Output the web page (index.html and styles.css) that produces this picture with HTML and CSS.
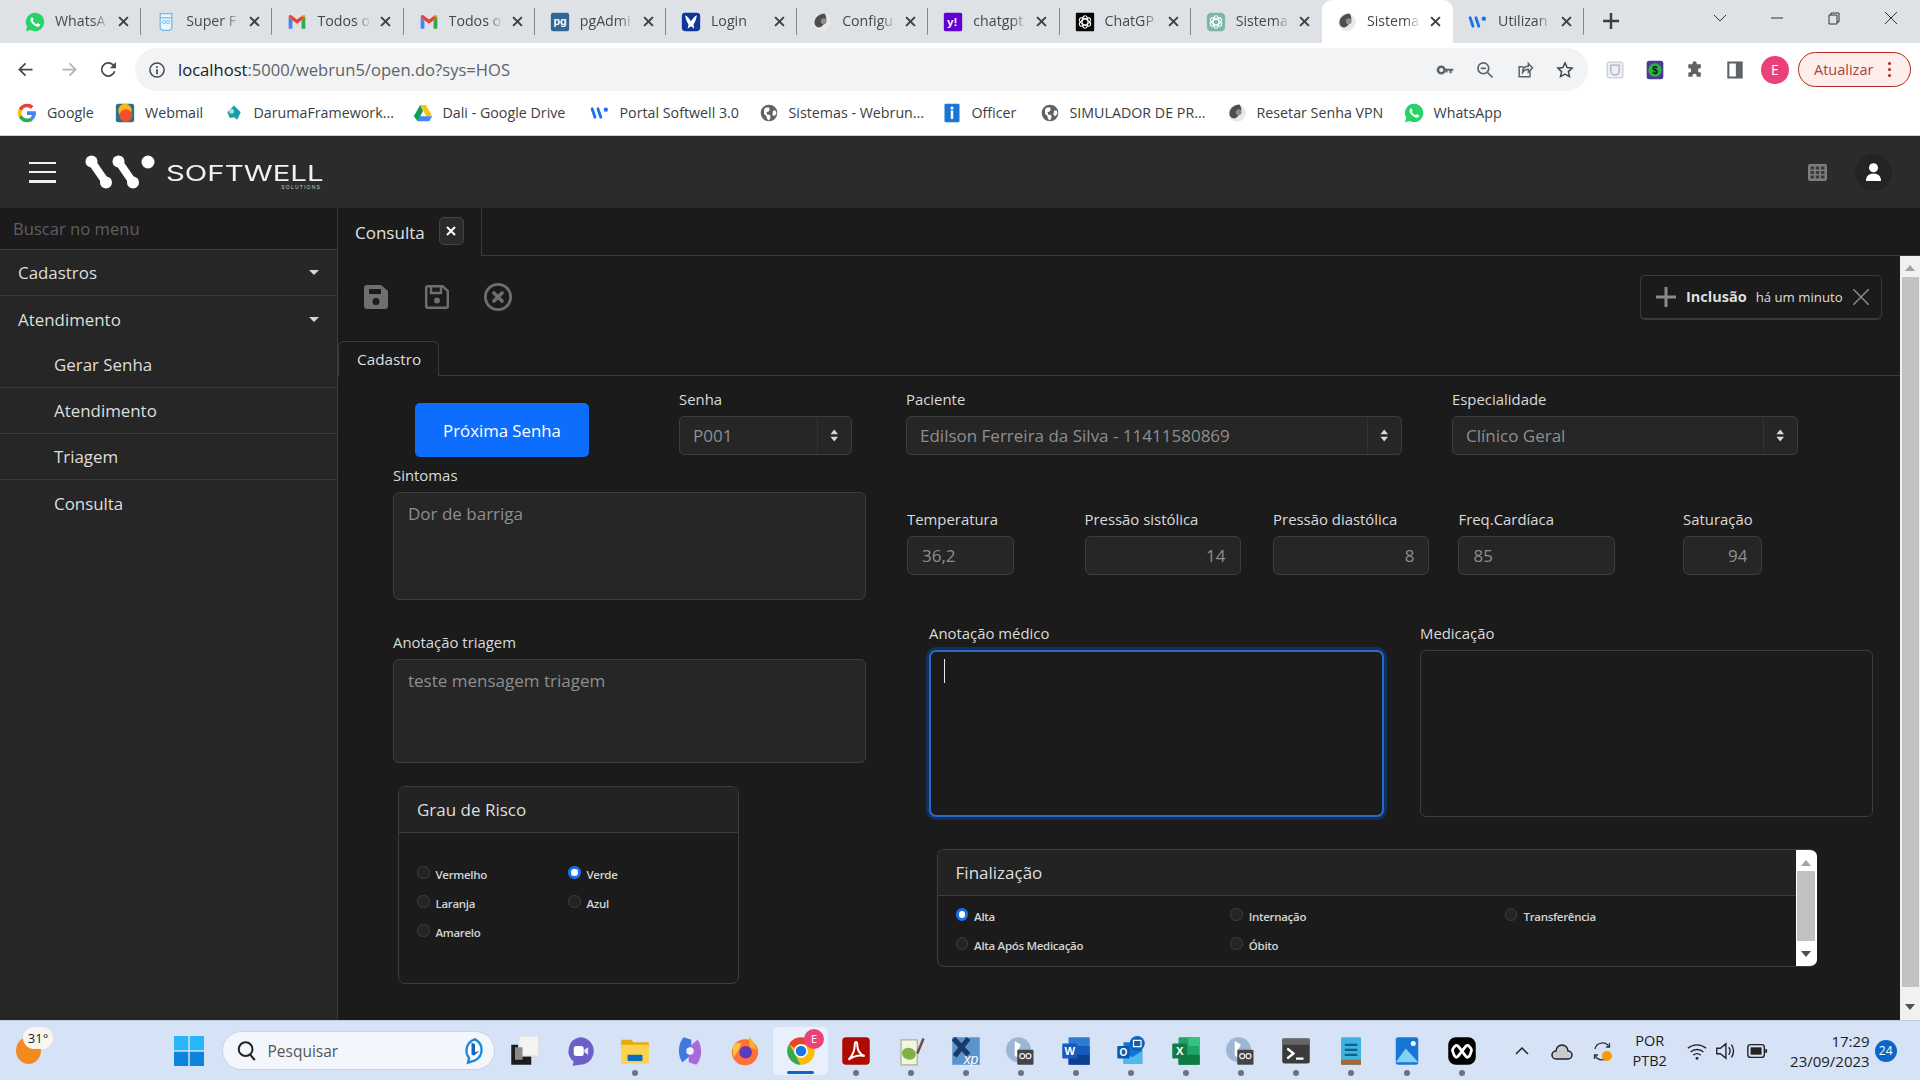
FILE: index.html
```html
<!DOCTYPE html>
<html lang="pt-BR">
<head>
<meta charset="utf-8">
<title>Sistema</title>
<link rel="stylesheet" href="styles.css">
</head>
<body>
<svg class="defs" xmlns="http://www.w3.org/2000/svg">
  <symbol id="i-whats" viewBox="0 0 24 24"><path fill="#25d366" d="M12 1a11 11 0 0 0-9.4 16.6L1.2 23l5.5-1.4A11 11 0 1 0 12 1z"/><path fill="#fff" d="M8.6 6.2c-.7 0-2 1.200-2 3s1.300 3.700 2.900 5.300 3.700 3.200 5.800 3.200c1.700 0 2.900-1.200 2.900-2.400 0-.5-2.700-2-3.200-1.800-.5.2-.9 1.100-1.400 1.100-.7 0-4-2.800-4.200-4 0-.5.900-.9 1-1.400 0-.6-1.400-3-1.800-3z"/></symbol>
  <symbol id="i-super" viewBox="0 0 24 24"><path fill="#eaf4fc" stroke="#79b7e6" stroke-width="1.500" d="M5 2h14v18l-3 2H8l-3-2z"/><path fill="none" stroke="#79b7e6" stroke-width="1.500" d="M5 7h14"/><circle cx="9.500" cy="12" r="2" fill="none" stroke="#79b7e6"/><circle cx="14.500" cy="12" r="2" fill="none" stroke="#79b7e6"/></symbol>
  <symbol id="i-gmail" viewBox="0 0 24 24"><path fill="#4285f4" d="M2 6v14h4.500V10z"/><path fill="#34a853" d="M17.500 10v10H22V6z"/><path fill="#ea4335" d="M2 6c0-2 2-3 3.600-1.800L12 9l6.400-4.800C20 3 22 4 22 6l-4.500 4L12 14l-5.500-4z"/><path fill="#fbbc04" d="M17.500 5.500 22 6c0-2-2-3-3.600-1.800z"/></symbol>
  <symbol id="i-login" viewBox="0 0 24 24"><rect x="1" y="1" width="22" height="22" rx="4" fill="#12359b"/><path fill="#fff" d="M5 4c3 1 5 5 7 7 2-2 4-6 7-7-.5 5-2.500 9-4 11l1 5-4-3-4 3 1-5C7.500 13 5.500 9 5 4z"/></symbol>
  <symbol id="i-soft" viewBox="0 0 24 24"><circle cx="12" cy="12" r="10.500" fill="#e9e9e9"/><path fill="#4d4d4d" d="M15 1.800C9 2 3.500 6 3 12c-.3 3.500 2 6.500 5.500 6.500 3 0 4-2.500 6-4 3-2.500 4-8 .5-12.700z"/><circle cx="14" cy="11" r="3.500" fill="#8d8d8d"/></symbol>
  <symbol id="i-gpt" viewBox="0 0 24 24"><rect x="1" y="1" width="22" height="22" rx="1" fill="#050505"/><g fill="none" stroke="#fff" stroke-width="1.300"><ellipse cx="12" cy="12" rx="3.500" ry="7.500"/><ellipse cx="12" cy="12" rx="3.500" ry="7.500" transform="rotate(60 12 12)"/><ellipse cx="12" cy="12" rx="3.500" ry="7.500" transform="rotate(120 12 12)"/></g></symbol>
  <symbol id="i-gpt2" viewBox="0 0 24 24"><rect x="1" y="1" width="22" height="22" rx="5" fill="#7fb7a6"/><g fill="none" stroke="#fff" stroke-width="1.300"><ellipse cx="12" cy="12" rx="3.500" ry="7.500"/><ellipse cx="12" cy="12" rx="3.500" ry="7.500" transform="rotate(60 12 12)"/><ellipse cx="12" cy="12" rx="3.500" ry="7.500" transform="rotate(120 12 12)"/></g></symbol>
  <symbol id="i-w" viewBox="0 0 24 24"><g fill="none" stroke="#1a73e8" stroke-width="3.400" stroke-linecap="round"><path d="M2.500 7l3.500 10M9.500 7l3.500 10"/></g><circle cx="19" cy="8" r="2.600" fill="#1a73e8"/></symbol>
  <symbol id="i-google" viewBox="0 0 24 24"><path fill="#ea4335" d="M12 5a7 7 0 0 1 4.700 1.800l3-3A11 11 0 0 0 2.200 7l3.500 2.700A7 7 0 0 1 12 5z"/><path fill="#4285f4" d="M22.700 12.300c0-.8-.1-1.500-.2-2.300H12v4.300h6a5 5 0 0 1-2.200 3.400l3.400 2.600c2.100-1.900 3.500-4.700 3.500-8z"/><path fill="#fbbc04" d="M5.700 14.300a7 7 0 0 1 0-4.600L2.200 7a11 11 0 0 0 0 10z"/><path fill="#34a853" d="M12 23c3 0 5.500-1 7.200-2.700l-3.400-2.600A7 7 0 0 1 5.700 14.300L2.200 17A11 11 0 0 0 12 23z"/></symbol>
  <symbol id="i-webmail" viewBox="0 0 24 24"><rect x="1" y="1" width="22" height="22" rx="3" fill="#2f6f87"/><circle cx="12" cy="9" r="8" fill="#fdb515"/><circle cx="13" cy="15" r="7.500" fill="#f0512d"/></symbol>
  <symbol id="i-daruma" viewBox="0 0 24 24"><path fill="#1f9aa8" d="M12 3l8 8-4 9-4-3-5 1-3-7z"/><circle cx="9" cy="10" r="3" fill="#a9dde2"/></symbol>
  <symbol id="i-drive" viewBox="0 0 24 24"><path fill="#ffc107" d="M8.500 2.500h7L23 16h-7z"/><path fill="#4285f4" d="M5.500 22h14l3.500-6H8.500z"/><path fill="#0f9d58" d="M8.500 2.500L1 16l4.500 6L12 9.500z"/></symbol>
  <symbol id="i-globe" viewBox="0 0 24 24"><circle cx="12" cy="12" r="10" fill="#5f6368"/><path fill="#fff" d="M7 6l4-1 2 2-1 3-3 1 1 3 3 0 1 3-2 4c-2-1-3-3-3-5l-3-3 0-4zM17 9l3 0 1 4-3 3-2-2z"/></symbol>
  <symbol id="i-officer" viewBox="0 0 24 24"><rect x="3" y="1" width="18" height="22" rx="1" fill="#1976d2"/><circle cx="12" cy="6" r="1.800" fill="#fff"/><rect x="10.500" y="9" width="3" height="10" fill="#fff"/></symbol>
  <symbol id="i-back" viewBox="0 0 24 24"><path fill="none" stroke="currentColor" stroke-width="2" d="M20 12H5M12 5l-7 7 7 7"/></symbol>
  <symbol id="i-fwd" viewBox="0 0 24 24"><path fill="none" stroke="currentColor" stroke-width="2" d="M4 12h15M12 5l7 7-7 7"/></symbol>
  <symbol id="i-reload" viewBox="0 0 24 24"><path fill="none" stroke="currentColor" stroke-width="2" d="M19 14a7.500 7.500 0 1 1-2-7.500L20 9"/><path fill="currentColor" d="M20.500 3.500v7h-7z"/></symbol>
  <symbol id="i-info" viewBox="0 0 24 24"><circle cx="12" cy="12" r="8.500" fill="none" stroke="#44474a" stroke-width="1.800"/><path fill="#44474a" d="M11 11h2v6h-2zM11 7.500h2v2h-2z"/></symbol>
  <symbol id="i-key" viewBox="0 0 24 24"><circle cx="7.500" cy="12" r="4" fill="none" stroke="#5f6368" stroke-width="3"/><path fill="#5f6368" d="M11 10.500h11V13h-2v3h-2.500v-3H15v2h-2.500v-2H11z"/></symbol>
  <symbol id="i-zoom" viewBox="0 0 24 24"><circle cx="10" cy="10" r="6.500" fill="none" stroke="#5f6368" stroke-width="2"/><path stroke="#5f6368" stroke-width="2" d="M15 15l6 6M7 10h6"/></symbol>
  <symbol id="i-share" viewBox="0 0 24 24"><path fill="none" stroke="#5f6368" stroke-width="1.800" d="M18 13v7H5V8h5M9 15c0-5 3-7.500 7-7.500V4l5 5.500-5 5V11c-3 0-5 1-7 4z"/></symbol>
  <symbol id="i-star" viewBox="0 0 24 24"><path fill="none" stroke="#44474a" stroke-width="1.800" d="M12 3.500l2.600 5.600 6 .7-4.500 4.100 1.300 6-5.400-3-5.400 3 1.300-6-4.500-4.100 6-.7z"/></symbol>
  <symbol id="i-puzzle" viewBox="0 0 24 24"><path fill="#5f6368" d="M9 4a2.500 2.500 0 0 1 5 0v1h5v5h-1a2.500 2.500 0 0 0 0 5h1v5h-5v-1a2.500 2.500 0 0 0-5 0v1H4v-5h1a2.500 2.500 0 0 0 0-5H4V5h5z"/></symbol>
  <symbol id="i-ext" viewBox="0 0 24 24"><rect x="2.500" y="2.500" width="19" height="19" rx="2" fill="#eceff3" stroke="#b8bcc2"/><path fill="none" stroke="#aab0b6" stroke-width="1.500" d="M7 6h10v7a5 5 0 0 1-10 0z"/></symbol>
  <symbol id="i-side" viewBox="0 0 24 24"><rect x="4" y="3" width="16" height="18" fill="none" stroke="#5f6368" stroke-width="2.500"/><rect x="13" y="3" width="7" height="18" fill="#5f6368"/></symbol>
  <symbol id="i-save-f" viewBox="0 0 24 24"><path fill="#6f6f6f" fill-rule="evenodd" d="M3 0h14l7 6v15a3 3 0 0 1-3 3H3a3 3 0 0 1-3-3V3a3 3 0 0 1 3-3zm2 4v5h12V4zm7 9a3.500 3.500 0 1 0 0 7 3.500 3.500 0 0 0 0-7z"/></symbol>
  <symbol id="i-save-o" viewBox="0 0 24 24"><path fill="none" stroke="#6f6f6f" stroke-width="2.400" d="M3 1.200h14.500L22.800 6v15a1.800 1.800 0 0 1-1.800 1.800H3A1.800 1.800 0 0 1 1.200 21V3A1.800 1.800 0 0 1 3 1.200z"/><path fill="none" stroke="#6f6f6f" stroke-width="2.400" d="M6 1.500v6.500h10V1.500"/><circle cx="12" cy="15.500" r="3" fill="#6f6f6f"/></symbol>
  <symbol id="i-cancel" viewBox="0 0 24 24"><circle cx="12" cy="12" r="10.800" fill="none" stroke="#6f6f6f" stroke-width="2.400"/><path stroke="#6f6f6f" stroke-width="3" stroke-linecap="round" d="M8.500 8.500l7 7M15.500 8.500l-7 7"/></symbol>
  <symbol id="i-updown" viewBox="0 0 10 14"><path fill="#d8d8d8" d="M5 0l4.500 5.500H.5zM5 14L.5 8.500h9z"/></symbol>
  <symbol id="i-win" viewBox="0 0 24 24"><rect width="11.400" height="11.400" fill="#29b6f6"/><rect x="12.600" width="11.400" height="11.400" fill="#29b6f6"/><rect y="12.600" width="11.400" height="11.400" fill="#0a84dc"/><rect x="12.600" y="12.600" width="11.400" height="11.400" fill="#0a84dc"/></symbol>
  <symbol id="i-bing" viewBox="0 0 24 24"><path fill="#fff" stroke="#1e88d8" stroke-width="2" d="M12 2a10 10 0 0 1 0 18l-6 2 1-4a10 10 0 0 1 5-16z"/><path fill="#1565c0" d="M9 5l3 1v7l4-1-5 4-2-1z"/></symbol>
  <symbol id="i-task" viewBox="0 0 24 24"><rect x="1" y="7" width="16" height="16" fill="#1c1c1c"/><rect x="7" y="0" width="16" height="16" fill="#f3f3f3" stroke="#ddd"/><rect x="4" y="9" width="6" height="10" fill="#8a8a8a"/></symbol>
  <symbol id="i-teams" viewBox="0 0 24 24"><path fill="#6c5fc7" d="M12 1a11 11 0 0 1 0 22c-2 0-4 .500-6 1l1-3.500A11 11 0 0 1 12 1z"/><rect x="7" y="8" width="8" height="8" rx="2" fill="#fff"/><path fill="#e9e6fb" d="M15.500 11l3-2v6l-3-2z"/></symbol>
  <symbol id="i-folder" viewBox="0 0 24 24"><path fill="#e8a90c" d="M1 3h8l2 2h12v5H1z"/><path fill="#fcd34d" d="M1 7h22v15H1z"/><rect x="6" y="15" width="12" height="5" rx="1" fill="#0a6cc2"/></symbol>
  <symbol id="i-copilot" viewBox="0 0 24 24"><path fill="#3f78e0" d="M7 1l6 2v12l-7 6C2 16 2 6 7 1z"/><path fill="#a96ad9" d="M17 23l-6-2V9l7-6c4 5 4 15-1 20z"/><circle cx="12" cy="12" r="3" fill="#e8eefc"/></symbol>
  <symbol id="i-fox" viewBox="0 0 24 24"><circle cx="12" cy="13" r="10.500" fill="#ff7139"/><path fill="#ffb01f" d="M15 1c3 2 6 6 6 10l-5-2z"/><circle cx="12.500" cy="13" r="5" fill="#5a3bbd"/><path fill="#ffc53d" d="M2 9c2-3 5-4 7-3l-2 5-4 6z"/></symbol>
  <symbol id="i-chrome" viewBox="0 0 24 24"><circle cx="12" cy="12" r="11" fill="#fbbc04"/><path fill="#ea4335" d="M12 1a11 11 0 0 1 9.500 5.500H12A5.500 5.500 0 0 0 7 9.500L2.500 6.500A11 11 0 0 1 12 1z"/><path fill="#34a853" d="M1 12a11 11 0 0 1 1.500-5.500L7.500 15l4 8A11 11 0 0 1 1 12z"/><circle cx="12" cy="12" r="5.500" fill="#fff"/><circle cx="12" cy="12" r="4.200" fill="#1a73e8"/></symbol>
  <symbol id="i-acro" viewBox="0 0 24 24"><rect x="1" y="1" width="22" height="22" rx="3" fill="#ad0b00"/><path fill="none" stroke="#fff" stroke-width="1.600" d="M6 19c3-3 5-8 5-12 0-3 2-3 2 0 0 5 3 8 6 9-4-1-9 0-13 3z"/></symbol>
  <symbol id="i-npp" viewBox="0 0 24 24"><path fill="#f2f5e6" stroke="#aab38c" d="M4 3h13v20H4z"/><path fill="#7cb342" d="M5 12c3-4 8-3 10 0s0 7-4 7-7-3-6-7z"/><path stroke="#6d4c41" stroke-width="2" d="M17 14l5-12"/></symbol>
  <symbol id="i-vm" viewBox="0 0 24 24"><circle cx="10" cy="11" r="10" fill="#9db6d4"/><path fill="#fff" d="M7 4l5 3-3 5 3 6-5-2z"/><rect x="9" y="11" width="13" height="12" rx="1" fill="#444"/><circle cx="13" cy="16" r="2" fill="none" stroke="#eee"/><circle cx="18" cy="16" r="2" fill="none" stroke="#eee"/></symbol>
  <symbol id="i-term" viewBox="0 0 24 24"><rect x="1" y="2" width="22" height="20" rx="2" fill="#3b3b3b"/><rect x="1" y="2" width="22" height="5" fill="#666"/><path fill="none" stroke="#fff" stroke-width="1.800" d="M5 10l5 4-5 4M12 18h6"/></symbol>
  <symbol id="i-note" viewBox="0 0 24 24"><rect x="4" y="1" width="16" height="22" rx="1" fill="#3db3e3"/><path stroke="#0e5f8a" stroke-width="1.800" d="M7 7h10M7 11h10M7 15h10"/><rect x="4" y="19" width="16" height="4" fill="#a1683a"/></symbol>
  <symbol id="i-photo" viewBox="0 0 24 24"><rect x="3" y="1" width="18" height="22" rx="2" fill="#1976d2"/><path fill="#7fd3f7" d="M3 21l8-11 10 11z"/><circle cx="17" cy="6" r="2" fill="#fff"/></symbol>
  <symbol id="i-loop" viewBox="0 0 24 24"><rect x="1" y="1" width="22" height="22" rx="6" fill="#000"/><path fill="none" stroke="#fff" stroke-width="2.200" d="M12 12C9 8 8 6.500 6.500 8S4 11 4.500 12 5 15 6.500 16.500 9 16 12 12s4-5.500 5.500-4 2.500 3 2 4-.5 3-2 4.500-2.500 0-5.500-4.500z"/></symbol>
  <symbol id="i-cloud" viewBox="0 0 24 24"><path fill="#c8cbd0" stroke="#222" stroke-width="1.500" d="M6 20a4 4 0 0 1 0-8 6 6 0 0 1 12 0 4 4 0 0 1 0 8z"/></symbol>
  <symbol id="i-sync" viewBox="0 0 24 24"><path fill="none" stroke="#333" stroke-width="1.300" d="M5 10a7.500 7.500 0 0 1 14-2M19 16a7.500 7.500 0 0 1-14 0M16 8h3.500V4M8 16H4.500v4"/><circle cx="17" cy="17" r="5" fill="#f59b00"/></symbol>
  <symbol id="i-wifi" viewBox="0 0 24 24"><path fill="none" stroke="#222" stroke-width="1.500" d="M2 9c6-5 14-5 20 0M5 13c4-3.500 10-3.500 14 0M8 16.500c2.500-2 5.500-2 8 0"/><circle cx="12" cy="20" r="1.500" fill="#222"/></symbol>
  <symbol id="i-vol" viewBox="0 0 24 24"><path fill="none" stroke="#222" stroke-width="1.500" d="M3 9v6h4l6 5V4L7 9zM16 8c2 2 2 6 0 8M19 5c3 4 3 10 0 14"/></symbol>
  <symbol id="i-bat" viewBox="0 0 24 24"><rect x="2" y="5" width="18" height="14" rx="3" fill="none" stroke="#222" stroke-width="1.500"/><rect x="5" y="8" width="12" height="8" fill="#222"/><rect x="21" y="10" width="2" height="4" fill="#222"/></symbol>
  <symbol id="i-search" viewBox="0 0 24 24"><circle cx="10.500" cy="10" r="7.500" fill="none" stroke="#222" stroke-width="2.200"/><path stroke="#222" stroke-width="2.400" d="M15.500 16l5 6"/></symbol>
  <symbol id="i-x" viewBox="0 0 10 10"><path stroke="currentColor" stroke-width="1.800" d="M1 1l8 8M9 1l-8 8"/></symbol>
</svg>

<div class="tabstrip">
  <div class="tab"><svg class="fav"><use href="#i-whats"/></svg><span class="tab-t">WhatsA</span><svg class="tab-x"><use href="#i-x"/></svg></div>
  <div class="tab"><svg class="fav"><use href="#i-super"/></svg><span class="tab-t">Super F</span><svg class="tab-x"><use href="#i-x"/></svg></div>
  <div class="tab"><svg class="fav"><use href="#i-gmail"/></svg><span class="tab-t">Todos o</span><svg class="tab-x"><use href="#i-x"/></svg></div>
  <div class="tab"><svg class="fav"><use href="#i-gmail"/></svg><span class="tab-t">Todos o</span><svg class="tab-x"><use href="#i-x"/></svg></div>
  <div class="tab"><svg class="fav" viewBox="0 0 24 24"><rect x="1" y="1" width="22" height="22" rx="3" fill="#336791"/><text x="12" y="15" text-anchor="middle" font-family="Liberation Sans" font-weight="700" font-size="13" fill="#fff">pg</text></svg><span class="tab-t">pgAdmi</span><svg class="tab-x"><use href="#i-x"/></svg></div>
  <div class="tab"><svg class="fav"><use href="#i-login"/></svg><span class="tab-t">Login</span><svg class="tab-x"><use href="#i-x"/></svg></div>
  <div class="tab"><svg class="fav"><use href="#i-soft"/></svg><span class="tab-t">Configu</span><svg class="tab-x"><use href="#i-x"/></svg></div>
  <div class="tab"><svg class="fav" viewBox="0 0 24 24"><rect x="1" y="1" width="22" height="22" rx="2" fill="#6001d2"/><text x="11" y="17" text-anchor="middle" font-family="Liberation Sans" font-weight="700" font-size="14" fill="#fff">y!</text></svg><span class="tab-t">chatgpt</span><svg class="tab-x"><use href="#i-x"/></svg></div>
  <div class="tab"><svg class="fav"><use href="#i-gpt"/></svg><span class="tab-t">ChatGP</span><svg class="tab-x"><use href="#i-x"/></svg></div>
  <div class="tab tab-pre"><svg class="fav"><use href="#i-gpt2"/></svg><span class="tab-t">Sistema</span><svg class="tab-x"><use href="#i-x"/></svg></div>
  <div class="tab tab-on"><svg class="fav"><use href="#i-soft"/></svg><span class="tab-t">Sistema</span><svg class="tab-x"><use href="#i-x"/></svg></div>
  <div class="tab"><svg class="fav"><use href="#i-w"/></svg><span class="tab-t">Utilizan</span><svg class="tab-x"><use href="#i-x"/></svg></div>
  <svg class="newtab" viewBox="0 0 18 18"><path stroke="#3c3f43" stroke-width="2.400" d="M9 1v16M1 9h16"/></svg>
  <div class="winctl">
    <svg class="wc wc-chev" viewBox="0 0 14 8"><path fill="none" stroke="#333" d="M1 1l6 6 6-6"/></svg>
    <svg class="wc" viewBox="0 0 14 14"><path stroke="#333" d="M1 7h12"/></svg>
    <svg class="wc" viewBox="0 0 14 14"><path fill="none" stroke="#333" d="M2 4h8v9H2zM4 4V2h8v9h-2"/></svg>
    <svg class="wc" viewBox="0 0 14 14"><path stroke="#333" d="M1 1l12 12M13 1L1 13"/></svg>
  </div>
</div>

<div class="toolbar">
  <svg class="nav nav-back"><use href="#i-back"/></svg>
  <svg class="nav nav-fwd"><use href="#i-fwd"/></svg>
  <svg class="nav nav-rel"><use href="#i-reload"/></svg>
  <div class="omnibox">
    <svg class="omni-info"><use href="#i-info"/></svg>
    <span class="url"><b>localhost</b>:5000/webrun5/open.do?sys=HOS</span>
    <div class="omni-right">
      <svg class="ti"><use href="#i-key"/></svg>
      <svg class="ti"><use href="#i-zoom"/></svg>
      <svg class="ti"><use href="#i-share"/></svg>
      <svg class="ti"><use href="#i-star"/></svg>
    </div>
  </div>
  <div class="exts">
    <svg class="ti"><use href="#i-ext"/></svg>
    <svg class="ti" viewBox="0 0 24 24"><rect x="2" y="1" width="20" height="22" rx="3" fill="#4a3d8f"/><circle cx="12" cy="12" r="8" fill="#2bb24c"/><text x="12" y="16.500" text-anchor="middle" font-family="Liberation Sans" font-weight="700" font-size="12" fill="#111">$</text></svg>
    <svg class="ti"><use href="#i-puzzle"/></svg>
    <svg class="ti"><use href="#i-side"/></svg>
    <div class="avatar">E</div>
  </div>
  <div class="update"><span>Atualizar</span><i class="kebab"></i></div>
</div>

<div class="bookmarks">
  <div class="bm"><svg class="fav"><use href="#i-google"/></svg>Google</div>
  <div class="bm"><svg class="fav"><use href="#i-webmail"/></svg>Webmail</div>
  <div class="bm"><svg class="fav"><use href="#i-daruma"/></svg>DarumaFramework...</div>
  <div class="bm"><svg class="fav"><use href="#i-drive"/></svg>Dali - Google Drive</div>
  <div class="bm"><svg class="fav"><use href="#i-w"/></svg>Portal Softwell 3.0</div>
  <div class="bm"><svg class="fav"><use href="#i-globe"/></svg>Sistemas - Webrun...</div>
  <div class="bm"><svg class="fav"><use href="#i-officer"/></svg>Officer</div>
  <div class="bm"><svg class="fav"><use href="#i-globe"/></svg>SIMULADOR DE PR...</div>
  <div class="bm"><svg class="fav"><use href="#i-soft"/></svg>Resetar Senha VPN</div>
  <div class="bm"><svg class="fav"><use href="#i-whats"/></svg>WhatsApp</div>
</div>

<header class="app-header">
  <div class="burger"><i></i><i></i><i></i></div>
  <div class="logo">
    <svg class="logo-mark" viewBox="0 0 70 34">
      <g fill="#fff"><circle cx="6.500" cy="6.500" r="6"/><circle cx="21" cy="27.500" r="6"/><circle cx="33.500" cy="6.500" r="6"/><circle cx="48" cy="27.500" r="6"/><circle cx="63" cy="7" r="6.500"/></g>
      <path stroke="#fff" stroke-width="8" d="M6.500 6.500l14.500 21M33.500 6.500l14.500 21"/>
    </svg>
    <div class="logo-word"><span class="logo-name">SOFTWELL</span><span class="logo-sub">SOLUTIONS</span></div>
  </div>
  <svg class="hdr-grid" viewBox="0 0 19 17"><rect width="19" height="17" rx="2" fill="#7d7d7d"/><g fill="#3a3a3a"><rect x="2.500" y="2.500" width="3.500" height="3"/><rect x="7.800" y="2.500" width="3.500" height="3"/><rect x="13" y="2.500" width="3.500" height="3"/><rect x="2.500" y="7" width="3.500" height="3"/><rect x="7.800" y="7" width="3.500" height="3"/><rect x="13" y="7" width="3.500" height="3"/><rect x="2.500" y="11.500" width="3.500" height="3"/><rect x="7.800" y="11.500" width="3.500" height="3"/><rect x="13" y="11.500" width="3.500" height="3"/></g></svg>
  <div class="hdr-user"><svg viewBox="0 0 18 20"><circle cx="9" cy="5" r="4.800" fill="#fff"/><path fill="#fff" d="M1 19c0-5 3-8 8-8s8 3 8 8z"/></svg></div>
</header>

<div class="app-body">
  <aside class="sidebar">
    <input class="side-search" type="text" placeholder="Buscar no menu">
    <div class="side-item side-line">Cadastros<i class="caret"></i></div>
    <div class="side-item">Atendimento<i class="caret"></i></div>
    <div class="side-item side-sub side-line">Gerar Senha</div>
    <div class="side-item side-sub side-line">Atendimento</div>
    <div class="side-item side-sub side-line">Triagem</div>
    <div class="side-item side-sub">Consulta</div>
  </aside>

  <main class="main">
    <div class="doc-tabs">
      <div class="doc-tab"><span>Consulta</span><span class="doc-x"><svg viewBox="0 0 10 10"><path stroke="#fff" stroke-width="2" d="M1 1l8 8M9 1l-8 8"/></svg></span></div>
    </div>
    <div class="viewer">
      <div class="page">
        <div class="page-tools">
          <svg class="tool"><use href="#i-save-f"/></svg>
          <svg class="tool"><use href="#i-save-o"/></svg>
          <svg class="tool tool-x"><use href="#i-cancel"/></svg>
          <div class="notice">
            <svg class="notice-plus" viewBox="0 0 20 20"><path stroke="#8a8a8a" stroke-width="3" d="M10 0v20M0 10h20"/></svg>
            <b>Inclusão</b><span>há um minuto</span>
            <svg class="notice-x" viewBox="0 0 16 16"><path stroke="#8a8a8a" stroke-width="1.500" d="M0 0l16 16M16 0L0 16"/></svg>
          </div>
        </div>
        <div class="sub-tabs"><div class="sub-tab">Cadastro</div></div>

        <form class="form">
          <div class="row-top">
            <button class="btn-next" type="button">Próxima Senha</button>
            <div class="field f-senha"><label>Senha</label>
              <div class="select"><select><option>P001</option></select><span class="sel-arrow"><svg><use href="#i-updown"/></svg></span></div></div>
            <div class="field f-paciente"><label>Paciente</label>
              <div class="select"><select><option>Edilson Ferreira da Silva - 11411580869</option></select><span class="sel-arrow"><svg><use href="#i-updown"/></svg></span></div></div>
            <div class="field f-esp"><label>Especialidade</label>
              <div class="select"><select><option>Clínico Geral</option></select><span class="sel-arrow"><svg><use href="#i-updown"/></svg></span></div></div>
          </div>

          <div class="row-main">
            <div class="col-left">
              <div class="field"><label>Sintomas</label><textarea class="ta ta-sint">Dor de barriga</textarea></div>
              <div class="field f-triagem"><label>Anotação triagem</label><textarea class="ta ta-tri">teste mensagem triagem</textarea></div>
              <section class="card card-risk">
                <div class="card-head">Grau de Risco</div>
                <div class="radios radios-risk">
                  <label class="radio"><input type="radio" name="risco"><span>Vermelho</span></label>
                  <label class="radio"><input type="radio" name="risco" checked><span>Verde</span></label>
                  <label class="radio"><input type="radio" name="risco"><span>Laranja</span></label>
                  <label class="radio"><input type="radio" name="risco"><span>Azul</span></label>
                  <label class="radio"><input type="radio" name="risco"><span>Amarelo</span></label>
                </div>
              </section>
            </div>

            <div class="col-right">
              <div class="vitals">
                <div class="field v-temp"><label>Temperatura</label><input class="inp" value="36,2"></div>
                <div class="field v-sis"><label>Pressão sistólica</label><input class="inp num" value="14"></div>
                <div class="field v-dia"><label>Pressão diastólica</label><input class="inp num" value="8"></div>
                <div class="field v-freq"><label>Freq.Cardíaca</label><input class="inp" value="85"></div>
                <div class="field v-sat"><label>Saturação</label><input class="inp num" value="94"></div>
              </div>
              <div class="notes">
                <div class="field n-med"><label>Anotação médico</label><div class="ta-wrap"><textarea class="ta ta-focus"></textarea><i class="caret-line"></i></div></div>
                <div class="field n-rem"><label>Medicação</label><textarea class="ta ta-rem"></textarea></div>
              </div>
              <section class="card card-fin">
                <div class="fin-content">
                  <div class="card-head">Finalização</div>
                  <div class="radios radios-fin">
                    <label class="radio"><input type="radio" name="fin" checked><span>Alta</span></label>
                    <label class="radio"><input type="radio" name="fin"><span>Internação</span></label>
                    <label class="radio"><input type="radio" name="fin"><span>Transferência</span></label>
                    <label class="radio"><input type="radio" name="fin"><span>Alta Após Medicação</span></label>
                    <label class="radio"><input type="radio" name="fin"><span>Óbito</span></label>
                  </div>
                </div>
                <div class="sb sb-fin"><i class="sb-up"></i><i class="sb-thumb"></i><i class="sb-down"></i></div>
              </section>
            </div>
          </div>
        </form>
      </div>
      <div class="sb sb-page"><i class="sb-up"></i><i class="sb-thumb"></i><i class="sb-down"></i></div>
    </div>
  </main>
</div>

<footer class="taskbar">
  <div class="weather"><i class="sun"></i><span class="temp">31°</span></div>
  <div class="win-btn"><svg><use href="#i-win"/></svg></div>
  <div class="tb-search"><svg class="tb-s-i"><use href="#i-search"/></svg><span>Pesquisar</span><svg class="tb-s-b"><use href="#i-bing"/></svg></div>
  <div class="apps">
    <div class="app"><svg><use href="#i-task"/></svg></div>
    <div class="app"><svg><use href="#i-teams"/></svg></div>
    <div class="app dot"><svg><use href="#i-folder"/></svg></div>
    <div class="app"><svg><use href="#i-copilot"/></svg></div>
    <div class="app"><svg><use href="#i-fox"/></svg></div>
    <div class="app app-on"><svg><use href="#i-chrome"/></svg><span class="chrome-badge">E</span></div>
    <div class="app dot"><svg><use href="#i-acro"/></svg></div>
    <div class="app dot"><svg><use href="#i-npp"/></svg></div>
    <div class="app dot"><svg viewBox="0 0 24 24"><rect x="1" y="1" width="22" height="22" fill="#5b93cc"/><path stroke="#173a66" stroke-width="4" d="M2 2l12 13M14 2L3 16"/><text x="16" y="22" text-anchor="middle" font-family="Liberation Sans" font-style="italic" font-size="11" fill="#fff">xp</text></svg></div>
    <div class="app dot"><svg><use href="#i-vm"/></svg></div>
    <div class="app dot"><svg viewBox="0 0 24 24"><rect x="6" y="1" width="17" height="22" rx="1" fill="#2b7cd3"/><rect x="6" y="8" width="17" height="7" fill="#185abd"/><rect x="6" y="15" width="17" height="8" fill="#103f91"/><rect x="1" y="6" width="12" height="12" rx="1" fill="#185abd"/><text x="7" y="15.500" text-anchor="middle" font-family="Liberation Sans" font-weight="700" font-size="9" fill="#fff">W</text></svg></div>
    <div class="app dot"><svg viewBox="0 0 24 24"><rect x="6" y="5" width="15" height="17" fill="#0f78d4"/><path fill="#50b8ef" d="M6 12l7 5 8-5v10H6z"/><rect x="1" y="8" width="10" height="10" rx="1" fill="#0a5cad"/><text x="6" y="16" text-anchor="middle" font-family="Liberation Sans" font-weight="700" font-size="8" fill="#fff">O</text><circle cx="17" cy="6" r="6" fill="#0f5fbb"/><rect x="14" y="3.500" width="6" height="5" fill="none" stroke="#fff"/></svg></div>
    <div class="app dot"><svg viewBox="0 0 24 24"><rect x="6" y="1" width="17" height="22" rx="1" fill="#21a366"/><rect x="14" y="1" width="9" height="7" fill="#33c481"/><rect x="6" y="15" width="17" height="8" fill="#107c41"/><rect x="1" y="6" width="12" height="12" rx="1" fill="#107c41"/><text x="7" y="15.500" text-anchor="middle" font-family="Liberation Sans" font-weight="700" font-size="9" fill="#fff">X</text></svg></div>
    <div class="app dot"><svg><use href="#i-vm"/></svg></div>
    <div class="app dot"><svg><use href="#i-term"/></svg></div>
    <div class="app dot"><svg><use href="#i-note"/></svg></div>
    <div class="app dot"><svg><use href="#i-photo"/></svg></div>
    <div class="app dot"><svg><use href="#i-loop"/></svg></div>
  </div>
  <div class="tray">
    <svg class="tray-chev" viewBox="0 0 14 8"><path fill="none" stroke="#222" stroke-width="1.500" d="M1 7l6-6 6 6"/></svg>
    <svg class="tray-i tray-w40"><use href="#i-cloud"/></svg>
    <svg class="tray-i tray-w40"><use href="#i-sync"/></svg>
    <div class="lang"><span>POR</span><span>PTB2</span></div>
    <svg class="tray-i tray-w28"><use href="#i-wifi"/></svg>
    <svg class="tray-i tray-w28"><use href="#i-vol"/></svg>
    <svg class="tray-i tray-bat"><use href="#i-bat"/></svg>
    <div class="clock"><span>17:29</span><span>23/09/2023</span></div>
    <div class="badge">24</div>
  </div>
</footer>
</body>
</html>
```

FILE: styles.css
```css
* { box-sizing: border-box; }
html, body { margin: 0; padding: 0; }
body {
  width: 1920px;
  height: 1080px;
  overflow: hidden;
  display: flex;
  flex-direction: column;
  font-family: "Open Sans", "Noto Sans", "Liberation Sans", sans-serif;
  background: #1b1b1b;
}
.defs { position: absolute; width: 0; height: 0; overflow: hidden; }

/* browser tabs */
.tabstrip { height: 43px; background: #dee1e6; display: flex; padding-left: 10px; flex: none; }
.tab { width: 131.2px; height: 43px; display: flex; align-items: center; padding-left: 15px; position: relative; flex: none; }
.tab::after { content: ""; position: absolute; right: 0; top: 8px; height: 27px; width: 1px; background: #85888d; }
.tab-pre::after { display: none; }
.tab-on { background: #fff; border-radius: 10px 10px 0 0; }
.tab-on::after { display: none; }
.fav { width: 20px; height: 20px; flex: none; }
.tab-t {
  width: 54px; margin-left: 10px; margin-bottom: 2px; font-size: 14.2px; color: #46484b; white-space: nowrap; overflow: hidden;
  -webkit-mask-image: linear-gradient(90deg, #000 72%, transparent 100%);
  mask-image: linear-gradient(90deg, #000 72%, transparent 100%);
}
.tab-x { width: 11px; height: 11px; margin-left: 9px; color: #3c3f43; flex: none; }
.newtab { width: 18px; height: 18px; margin-left: 18px; margin-top: 12px; flex: none; }
.winctl { margin-left: auto; display: flex; align-items: center; height: 36px; padding-right: 22px; }
.wc { width: 14px; height: 14px; margin-left: 43px; }
.wc-chev { height: 8px; }

/* toolbar */
.toolbar { height: 49px; background: #fff; display: flex; align-items: center; padding-left: 15px; padding-top: 4px; flex: none; }
.nav { width: 21px; height: 21px; flex: none; color: #45484c; }
.nav-fwd { margin-left: 23px; color: #b0b3b7; }
.nav-rel { margin-left: 18px; }
.omnibox {
  width: 1453px; height: 43px; margin-left: 16px; border-radius: 22px; background: #f1f3f4;
  display: flex; align-items: center; padding-left: 12px;
}
.omni-info { width: 20px; height: 20px; flex: none; }
.url { margin-left: 11px; font-size: 16.6px; color: #5f6368; }
.url b { font-weight: 400; color: #202124; }
.omni-right { margin-left: auto; display: flex; padding-right: 13px; gap: 20px; }
.ti { width: 20px; height: 20px; flex: none; display: block; }
.exts { margin-left: 17px; display: flex; align-items: center; gap: 20px; }
.avatar {
  width: 28px; height: 28px; margin-left: -4px; border-radius: 50%; background: #ec407a; color: #fff;
  font-size: 14px; text-align: center; line-height: 28px;
}
.update {
  width: 113px; height: 35px; margin-left: 9px; border: 1px solid #b3261e; border-radius: 18px; background: #fdeeec;
  display: flex; align-items: center; padding-left: 15px; font-size: 14.5px; color: #a8423a; position: relative;
}
.kebab { width: 3px; height: 3px; border-radius: 50%; background: #b3261e; margin-left: 15px; box-shadow: 0 -6px 0 #b3261e, 0 6px 0 #b3261e; }

/* bookmarks */
.bookmarks {
  height: 43px; background: #fff; display: grid; align-items: center; flex: none; padding-left: 17px; padding-bottom: 2px;
  grid-template-columns: 98px 108.5px 189px 177px 169px 183px 98px 187px 177px 1fr;
  font-size: 14.25px; color: #3c4043;
}
.bm { display: flex; align-items: center; gap: 10px; white-space: nowrap; }

/* app header */
.app-header { height: 73px; background: #2b2b2b; border-top: 1px solid #d0d0d0; display: flex; align-items: center; padding-left: 29px; flex: none; }
.burger { width: 27px; height: 21px; display: flex; flex-direction: column; justify-content: space-between; }
.burger i { display: block; height: 2.500px; background: #f0f0f0; }
.logo { display: flex; align-items: center; margin-left: 29px; }
.logo-mark { width: 70px; height: 34px; }
.logo-word { margin-left: 11px; padding-top: 9px; display: flex; flex-direction: column; width: 155px; }
.logo-name {
  display: block; font-family: "Inter", sans-serif; font-size: 21px; line-height: 20px; font-weight: 400; color: #f2f2f2; white-space: nowrap;
  transform: scaleX(1.4); transform-origin: left center;
}
.logo-sub { font-family: "Liberation Sans", sans-serif; font-size: 5px; line-height: 6px; letter-spacing: 1.2px; color: #cfcfcf; text-align: right; }
.hdr-grid { width: 19px; height: 17px; margin-left: auto; }
.hdr-user { width: 37px; height: 37px; margin-left: 28px; margin-right: 28px; border-radius: 50%; background: #242424; display: flex; align-items: center; justify-content: center; }
.hdr-user svg { width: 17px; height: 19px; }

/* layout */
.app-body { height: 812px; display: flex; flex: none; }
.sidebar { width: 338px; background: #262626; border-right: 1px solid #3b3b3b; flex: none; display: flex; flex-direction: column; }
.side-search {
  height: 42px; flex: none; background: #1b1b1b; border: 0; border-bottom: 1px solid #3b3b3b; padding: 0 13px;
  font: 400 16.6px "Open Sans", sans-serif; color: #ccc; outline: none;
}
.side-search::placeholder { color: #5f5f5f; opacity: 1; }
.side-item { height: 46px; flex: none; display: flex; align-items: center; padding-left: 18px; padding-right: 18px; font-size: 16.9px; color: #dedede; justify-content: space-between; }
.side-line { border-bottom: 1px solid #3b3b3b; }
.side-sub { padding-left: 54px; }
.caret { width: 0; height: 0; border-left: 5px solid transparent; border-right: 5px solid transparent; border-top: 5px solid #d8d8d8; }

.main { flex: 1; min-width: 0; display: flex; flex-direction: column; }
.doc-tabs { height: 48px; flex: none; display: flex; border-bottom: 1px solid #3b3b3b; }
.doc-tab { width: 144px; display: flex; align-items: center; padding-left: 17px; border-right: 1px solid #3b3b3b; font-size: 17px; color: #e0e0e0; margin-bottom: -1px; background: #1b1b1b; }
.doc-x { width: 25px; height: 28px; margin-left: 14px; margin-bottom: 3px; border: 1px solid #444; border-radius: 5px; background: #2b2b2b; display: flex; align-items: center; justify-content: center; }
.doc-x svg { width: 10px; height: 10px; }

.viewer { flex: 1; min-height: 0; display: flex; }
.page { width: 1562px; flex: none; display: flex; flex-direction: column; }
.page-tools { height: 85px; flex: none; display: flex; align-items: center; padding-left: 26px; padding-right: 18px; padding-bottom: 3px; }
.tool { width: 24px; height: 24px; margin-right: 37px; flex: none; }
.tool-x { width: 28px; height: 28px; margin-left: -2px; }
.notice {
  margin-left: auto; width: 242px; height: 45px; border: 1px solid #3a3a3a; border-bottom-width: 2px; border-radius: 5px;
  display: flex; align-items: center; padding-left: 15px; color: #dedede; font-size: 13.2px;
}
.notice-plus { width: 20px; height: 20px; flex: none; }
.notice b { margin-left: 10px; font-size: 14.5px; font-weight: 700; }
.notice span { margin-left: 9px; }
.notice-x { width: 16px; height: 16px; margin-left: auto; margin-right: 12px; flex: none; }

.sub-tabs { height: 35px; flex: none; border-bottom: 1px solid #3b3b3b; display: flex; }
.sub-tab { width: 101px; height: 35px; border: 1px solid #3b3b3b; border-bottom: 0; border-radius: 6px 6px 0 0; background: #1b1b1b; font-size: 15.3px; color: #dedede; display: flex; align-items: center; padding-left: 18px; }

.form { flex: 1; min-height: 0; padding-top: 13px; }
.field { display: flex; flex-direction: column; flex: none; }
.field > label { height: 21px; margin-bottom: 6px; line-height: 20px; font-size: 14.9px; color: #dadada; }

.row-top { display: flex; height: 68px; padding-left: 77px; }
.btn-next { width: 174px; height: 54px; margin-top: 14px; flex: none; border: 0; border-radius: 5px; background: #0d6efd; color: #fff; font: 400 16.8px "Open Sans", sans-serif; }
.f-senha { width: 172.5px; margin-left: 90px; }
.f-paciente { width: 495.5px; margin-left: 54.5px; }
.f-esp { width: 345.500px; margin-left: 50.5px; }
.select { height: 39px; display: flex; background: #262626; border: 1px solid #3d3d3d; border-radius: 5px; }
.select select {
  flex: 1; min-width: 0; appearance: none; -webkit-appearance: none; background: transparent; border: 0; outline: none;
  font: 400 17px "Open Sans", sans-serif; color: #8e8e8e; padding-left: 13px;
}
.sel-arrow { width: 34px; flex: none; border-left: 1px solid #333; display: flex; align-items: center; justify-content: center; }
.sel-arrow svg { width: 8.5px; height: 13px; }

.row-main { display: flex; padding-left: 55px; }
.col-left { width: 473px; flex: none; margin-top: 8px; display: flex; flex-direction: column; }
.ta, .inp {
  display: block; width: 100%; background: #262626; border: 1px solid #3d3d3d; border-radius: 6px; outline: none; color: #8e8e8e;
  font: 400 17px "Open Sans", sans-serif; resize: none;
}
.ta { padding: 8.5px 14px; }
.ta-sint { height: 108px; }
.f-triagem { margin-top: 32px; }
.ta-tri { height: 104px; }
.card { border: 1px solid #3d3d3d; border-radius: 7px; background: #1b1b1b; flex: none; overflow: hidden; }
.card-head { height: 46px; background: #232323; border-bottom: 1px solid #3d3d3d; display: flex; align-items: center; padding-left: 18px; font-size: 17px; color: #dedede; }
.card-risk { width: 341px; height: 198px; margin-top: 23px; margin-left: 5px; }
.radios { display: grid; grid-auto-rows: 29px; padding-left: 18px; }
.radios-risk { grid-template-columns: 151px 151px; padding-top: 25px; }
.radios-fin { grid-template-columns: 274.7px 274.7px 274.7px; padding-top: 4px; }
.radio { display: flex; align-items: center; gap: 6px; font-size: 11.5px; letter-spacing: -0.3px; font-weight: 600; color: #d4d4d4; }
.radio span { padding-top: 4px; }
.radio input {
  appearance: none; -webkit-appearance: none; width: 12.500px; height: 12.500px; margin: 0; flex: none; border-radius: 50%;
  border: 1px solid #3e3e3e; background: #242424;
}
.radio input:checked { background: #fff; border: 3.500px solid #1a6ee8; }

.col-right { flex: none; margin-left: 41px; margin-top: 52px; width: 960px; }
.vitals { display: flex; }
.inp { height: 39px; padding: 0 14px; }
.num { text-align: right; }
.v-temp { width: 106.5px; }
.v-sis { width: 156px; margin-left: 71px; }
.v-dia { width: 156.4px; margin-left: 32.6px; }
.v-freq { width: 156.3px; margin-left: 29px; }
.v-sat { width: 79.4px; margin-left: 68.3px; }
.notes { display: flex; margin-top: 48px; margin-left: 22px; }
.n-med { width: 455px; }
.n-rem { width: 453px; margin-left: 36px; }
.ta-wrap { position: relative; height: 167px; }
.ta-focus { height: 167px; border: 2px solid #2a68c9; border-radius: 7px; box-shadow: 0 0 0 3px #12305c; background: #1b1b1b; }
.ta-rem { height: 167px; background: #1b1b1b; }
.caret-line { position: absolute; left: 15px; top: 9px; width: 1px; height: 24px; background: #e8e8e8; }
.card-fin { width: 880px; height: 118px; margin-top: 32px; margin-left: 29.6px; display: flex; border-right: 0; }
.fin-content { flex: 1; min-width: 0; }

/* scrollbars */
.sb { flex: none; display: flex; flex-direction: column; background: #f1f1f1; align-items: center; }
.sb-thumb { display: block; background: #c1c1c1; }
.sb-up, .sb-down { display: block; width: 0; height: 0; border-left: 5px solid transparent; border-right: 5px solid transparent; }
.sb-up { border-bottom: 6px solid #a3a3a3; }
.sb-down { border-top: 6px solid #505050; }
.sb-page { width: 20px; padding-top: 9px; }
.sb-page .sb-thumb { width: 17px; height: 710px; margin: 6px 0 17px; }
.sb-fin { width: 21px; padding-top: 10px; background: #fff; }
.sb-fin .sb-thumb { width: 18px; height: 70px; margin: 5px 0 10px; }

/* taskbar */
.taskbar { height: 60px; flex: none; background: #d6e2f6; border-top: 1px solid #bfc8d6; display: flex; align-items: center; padding-left: 16px; color: #1c1c1c; }
.weather { width: 27px; height: 27px; position: relative; flex: none; margin-left: 0; }
.sun { display: block; width: 25px; height: 27px; border-radius: 50%; background: #f28a1e; }
.temp { position: absolute; left: 7px; top: -10px; width: 30px; height: 22px; border-radius: 11px; background: #f9f6f0; font-size: 13px; line-height: 22px; text-align: center; }
.win-btn { width: 55px; margin-left: 118.5px; display: flex; justify-content: center; flex: none; }
.win-btn svg { width: 30px; height: 30px; }
.tb-search {
  width: 273px; height: 39px; margin-left: 5px; flex: none; border-radius: 20px; background: #f3f7fd; border: 1px solid #c9d3e4;
  display: flex; align-items: center; padding-left: 13px; font-size: 15.5px; color: #555; position: relative;
}
.tb-s-i { width: 22px; height: 22px; flex: none; }
.tb-search span { margin-left: 10px; }
.tb-s-b { width: 28px; height: 30px; margin-left: auto; margin-right: 5px; }
.apps { display: flex; margin-left: 3px; }
.app { width: 55.1px; height: 48px; display: flex; align-items: center; justify-content: center; position: relative; flex: none; }
.app svg { width: 30px; height: 30px; }
.dot::after { content: ""; position: absolute; left: 50%; bottom: -1px; width: 6px; height: 6px; margin-left: -3px; border-radius: 50%; background: #6b7280; }
.app-on { background: #e9f0fb; border-radius: 5px; }
.app-on::after { content: ""; position: absolute; left: 14px; right: 14px; bottom: 1px; height: 3px; border-radius: 2px; background: #0a67c8; }
.chrome-badge { position: absolute; right: 4px; top: 2px; width: 20px; height: 20px; border-radius: 50%; background: #ec407a; color: #fff; font-size: 11px; text-align: center; line-height: 20px; }
.tray { display: flex; align-items: center; margin-left: 13px; }
.tray-chev { width: 14px; height: 8px; margin: 0 13px; flex: none; }
.tray-i { height: 24px; flex: none; }
.tray-w40 { width: 40px; }
.tray-w28 { width: 28px; height: 22px; }
.tray-bat { width: 28px; height: 22px; margin-left: 4px; }
.lang { width: 55px; flex: none; display: flex; flex-direction: column; align-items: center; font-size: 14.5px; line-height: 20px; margin-right: 6px; }
.clock { width: 98.5px; flex: none; display: flex; flex-direction: column; align-items: flex-end; font-size: 15px; line-height: 20px; }
.badge { width: 22px; height: 22px; margin-left: 5px; flex: none; border-radius: 50%; background: #0a67c8; color: #fff; font-size: 12px; line-height: 22px; text-align: center; }
```
